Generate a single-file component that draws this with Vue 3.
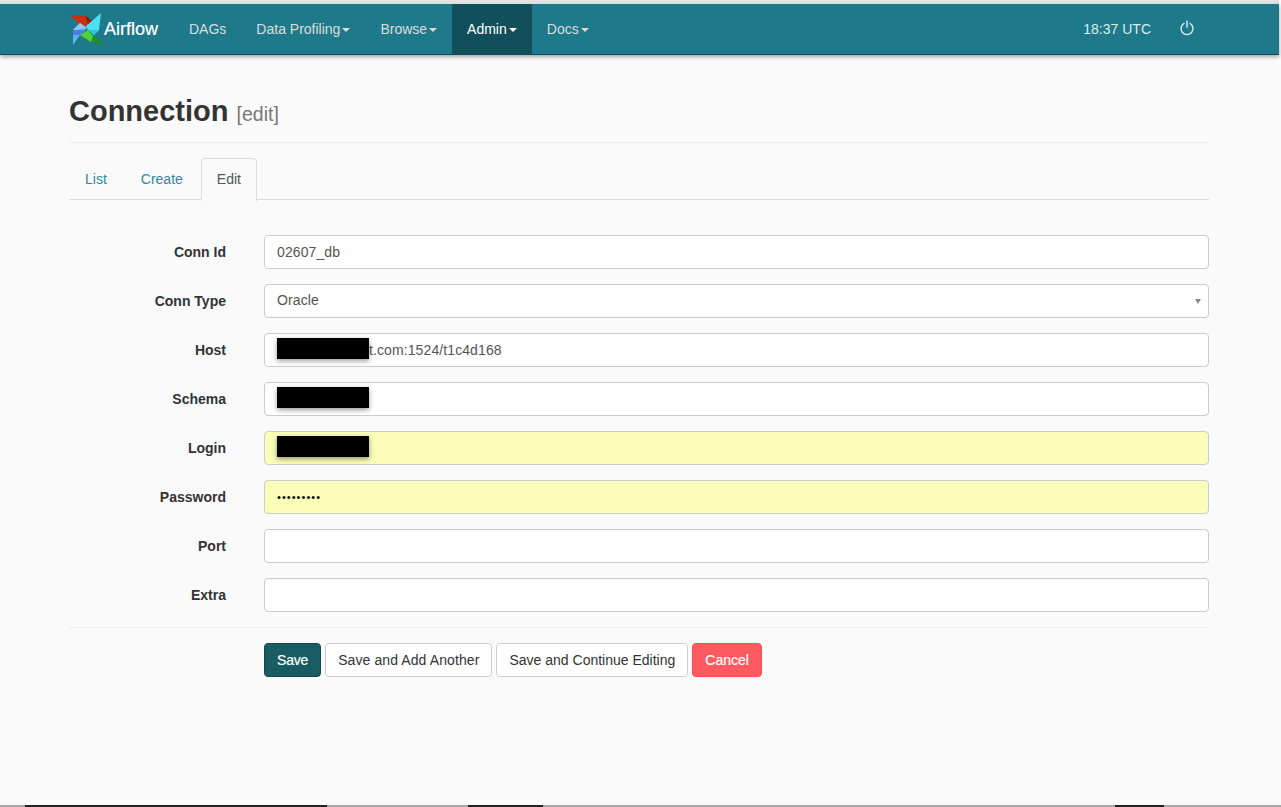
<script setup>
const navItems = [
  { label: 'DAGs' },
  { label: 'Data Profiling', caret: true },
  { label: 'Browse', caret: true },
  { label: 'Admin', caret: true, active: true },
  { label: 'Docs', caret: true },
];

const tabs = [
  { label: 'List' },
  { label: 'Create' },
  { label: 'Edit', active: true },
];

const fields = [
  { label: 'Conn Id', value: '02607_db' },
  { label: 'Conn Type', value: 'Oracle', select: true },
  { label: 'Host', value: 't.com:1524/t1c4d168', hidden: true, indent: true },
  { label: 'Schema', value: '', hidden: true },
  { label: 'Login', value: '', hidden: true, autofill: true },
  { label: 'Password', value: 'secret123', type: 'password', autofill: true },
  { label: 'Port', value: '' },
  { label: 'Extra', value: '' },
];

const strip = [
  { w: 25, dark: false },
  { w: 302, dark: true },
  { w: 141, dark: false },
  { w: 75, dark: true },
  { w: 572, dark: false },
  { w: 49, dark: true },
  { w: 117, dark: false },
];
</script>

<template>
  <div class="window">
    <div class="page">
      <div class="top-edge"></div>
      <nav class="navbar">
        <a class="brand">
          <svg class="logo" width="34" height="34" viewBox="0 0 34 34">
            <polygon points="0,2 15,2.5 25,10 21,15 10,12" fill="#c62f12" />
            <polygon points="15,2.5 25,10 21,15 17,9" fill="#8e1f0c" />
            <polygon points="31,0 29,17 24,22 18,17 16,13" fill="#4ce0f5" />
            <polygon points="29,17 24,22 18,17" fill="#33c5dc" />
            <polygon points="33,30 22,30 10,22 18,17 25,24" fill="#1e8f2a" />
            <polygon points="21,29 10,22 18,17 23,23" fill="#4fd03c" />
            <polygon points="3,32 3,17 10,10 17,15 10,22" fill="#58b4ee" />
            <polygon points="3,17 10,10 17,15" fill="#96c8f2" />
            <polygon points="3,22 3,17 15,17 10,22" fill="#4e7fe0" />
          </svg>
          <span>Airflow</span>
        </a>
        <ul class="nav-list">
          <li v-for="item in navItems" :key="item.label" :class="['nav-item', { active: item.active }]">
            {{ item.label }}<span v-if="item.caret" class="caret"></span>
          </li>
        </ul>
        <div class="nav-right">
          <span class="clock">18:37 UTC</span>
          <svg class="power" width="16" height="16" viewBox="0 0 16 16" fill="none" stroke="#dcecef" stroke-width="1.4" stroke-linecap="round">
            <path d="M5 3.4a6 6 0 1 0 6 0" />
            <path d="M8 1.2v6" />
          </svg>
        </div>
      </nav>

      <main class="container">
        <h1 class="title">Connection <small>[edit]</small></h1>

        <ul class="tabs">
          <li v-for="tab in tabs" :key="tab.label" :class="['tab', { active: tab.active }]">{{ tab.label }}</li>
        </ul>

        <form class="form" @submit.prevent>
          <div v-for="field in fields" :key="field.label" class="form-row">
            <label class="form-label">{{ field.label }}</label>
            <div class="form-control">
              <div v-if="field.select" class="select-box">
                {{ field.value }}
                <span class="select-arrow"></span>
              </div>
              <input
                v-else
                :class="['input', { autofill: field.autofill, indent: field.indent, secret: field.type === 'password' }]"
                :type="field.type || 'text'"
                :value="field.value"
              />
              <span v-if="field.hidden" class="redact"></span>
            </div>
          </div>

          <div class="form-actions">
            <button class="btn btn-save">Save</button>
            <button class="btn">Save and Add Another</button>
            <button class="btn btn-tight">Save and Continue Editing</button>
            <button class="btn btn-cancel">Cancel</button>
          </div>
        </form>
      </main>
    </div>
    <div class="strip">
      <span
        v-for="(seg, i) in strip"
        :key="i"
        :class="{ dark: seg.dark }"
        :style="{ width: seg.w + 'px' }"
      ></span>
    </div>
  </div>
</template>

<style>
html,
body {
  margin: 0;
  background: #fafafa;
}
</style>

<style scoped>
.window {
  width: 1281px;
  height: 807px;
  overflow: hidden;
  background: #fafafa;
  font-family: "Liberation Sans", Arial, sans-serif;
  font-size: 14px;
  color: #333;
  display: flex;
  flex-direction: column;
}

.page {
  flex: 1;
  width: 1279px;
  background: #fafafa;
  border-radius: 0 0 6px 6px;
}

.top-edge {
  height: 4px;
  background: #e4e4e4;
}

.navbar {
  height: 50px;
  background: #1e7a8a;
  border-bottom: 1px solid #10505a;
  box-shadow: 0 2px 4px rgba(0, 0, 0, 0.35);
  display: flex;
  align-items: stretch;
  padding-left: 70px;
  padding-right: 84px;
  box-sizing: content-box;
}

.brand {
  display: flex;
  align-items: center;
  width: 104px;
  color: #fff;
  font-size: 18px;
  -webkit-text-stroke: 0.2px #fff;
}

.logo {
  flex: none;
  margin-top: 2px;
}

.nav-list {
  display: flex;
  list-style: none;
  margin: 0;
  padding: 0;
}

.nav-item {
  padding: 0 15px;
  line-height: 50px;
  color: #dcdcdc;
}

.nav-item.active {
  background: #11505b;
  color: #fff;
}

.caret {
  display: inline-block;
  margin-left: 2px;
  vertical-align: middle;
  border-top: 4px solid;
  border-left: 4px solid transparent;
  border-right: 4px solid transparent;
}

.nav-right {
  margin-left: auto;
  display: flex;
  align-items: center;
  gap: 28px;
  color: #dcecef;
}

.power {
  margin-top: -2px;
}

.container {
  width: 1140px;
  margin-left: 69px;
}

.title {
  margin: 0;
  padding: 38px 0 13px;
  height: 36px;
  font-size: 29px;
  line-height: 36px;
  font-weight: bold;
  color: #333;
  border-bottom: 1px solid #eee;
  box-sizing: content-box;
}

.title small {
  font-size: 19.5px;
  font-weight: normal;
  color: #777;
}

.tabs {
  display: flex;
  list-style: none;
  margin: 15px 0 0;
  padding: 0;
  height: 41px;
  border-bottom: 1px solid #ddd;
}

.tab {
  padding: 0 15px;
  margin-right: 2px;
  height: 41px;
  line-height: 40px;
  color: #2a8a9b;
  border: 1px solid transparent;
  border-bottom: none;
  border-radius: 4px 4px 0 0;
}

.tab.active {
  color: #555;
  background: #fafafa;
  border-color: #ddd;
  height: 42px;
}

.form {
  padding-top: 35px;
}

.form-row {
  display: flex;
  align-items: center;
  height: 34px;
  margin-bottom: 15px;
}

.form-label {
  width: 157px;
  margin-right: 38px;
  text-align: right;
  font-weight: bold;
  color: #333;
}

.form-control {
  position: relative;
  flex: 1;
}

.input,
.select-box {
  display: block;
  width: 100%;
  height: 34px;
  box-sizing: border-box;
  padding: 0 12px;
  font-family: inherit;
  font-size: 14px;
  letter-spacing: 0.1px;
  line-height: 30px;
  color: #555;
  background: #fff;
  border: 1px solid #ccc;
  border-radius: 4px;
  outline: none;
}

.input.autofill {
  background: #fbfdb8;
  color: #000;
}

.input.secret {
  font-size: 11px;
  letter-spacing: 1.05px;
}

.input.indent {
  padding-left: 104px;
}

.select-box {
  position: relative;
}

.select-arrow {
  position: absolute;
  right: 7px;
  top: 14px;
  border-top: 5px solid #888;
  border-left: 3px solid transparent;
  border-right: 3px solid transparent;
}

.redact {
  position: absolute;
  left: 13px;
  top: 5px;
  width: 92px;
  height: 21px;
  background: #000;
  box-shadow: 0 2px 5px rgba(0, 0, 0, 0.4);
}

.form-actions {
  display: flex;
  gap: 4px;
  padding: 15px 0 0 195px;
  border-top: 1px solid #eee;
}

.btn {
  height: 34px;
  padding: 0 12px;
  font-family: inherit;
  font-size: 14px;
  letter-spacing: 0.1px;
  color: #333;
  background: #fff;
  border: 1px solid #ccc;
  border-radius: 4px;
}

.btn-tight {
  letter-spacing: 0;
}

.btn-save {
  background: #1a5c63;
  border-color: #13474d;
  color: #fff;
  letter-spacing: -0.2px;
  -webkit-text-stroke: 0.2px #fff;
}

.btn-cancel {
  background: #ff5a5f;
  border-color: #ff4a50;
  color: #fff;
  letter-spacing: 0;
  -webkit-text-stroke: 0.2px #fff;
}

.strip {
  display: flex;
  height: 2px;
  flex: none;
}

.strip span {
  background: #a8a8a8;
}

.strip span.dark {
  background: #222;
}
</style>
